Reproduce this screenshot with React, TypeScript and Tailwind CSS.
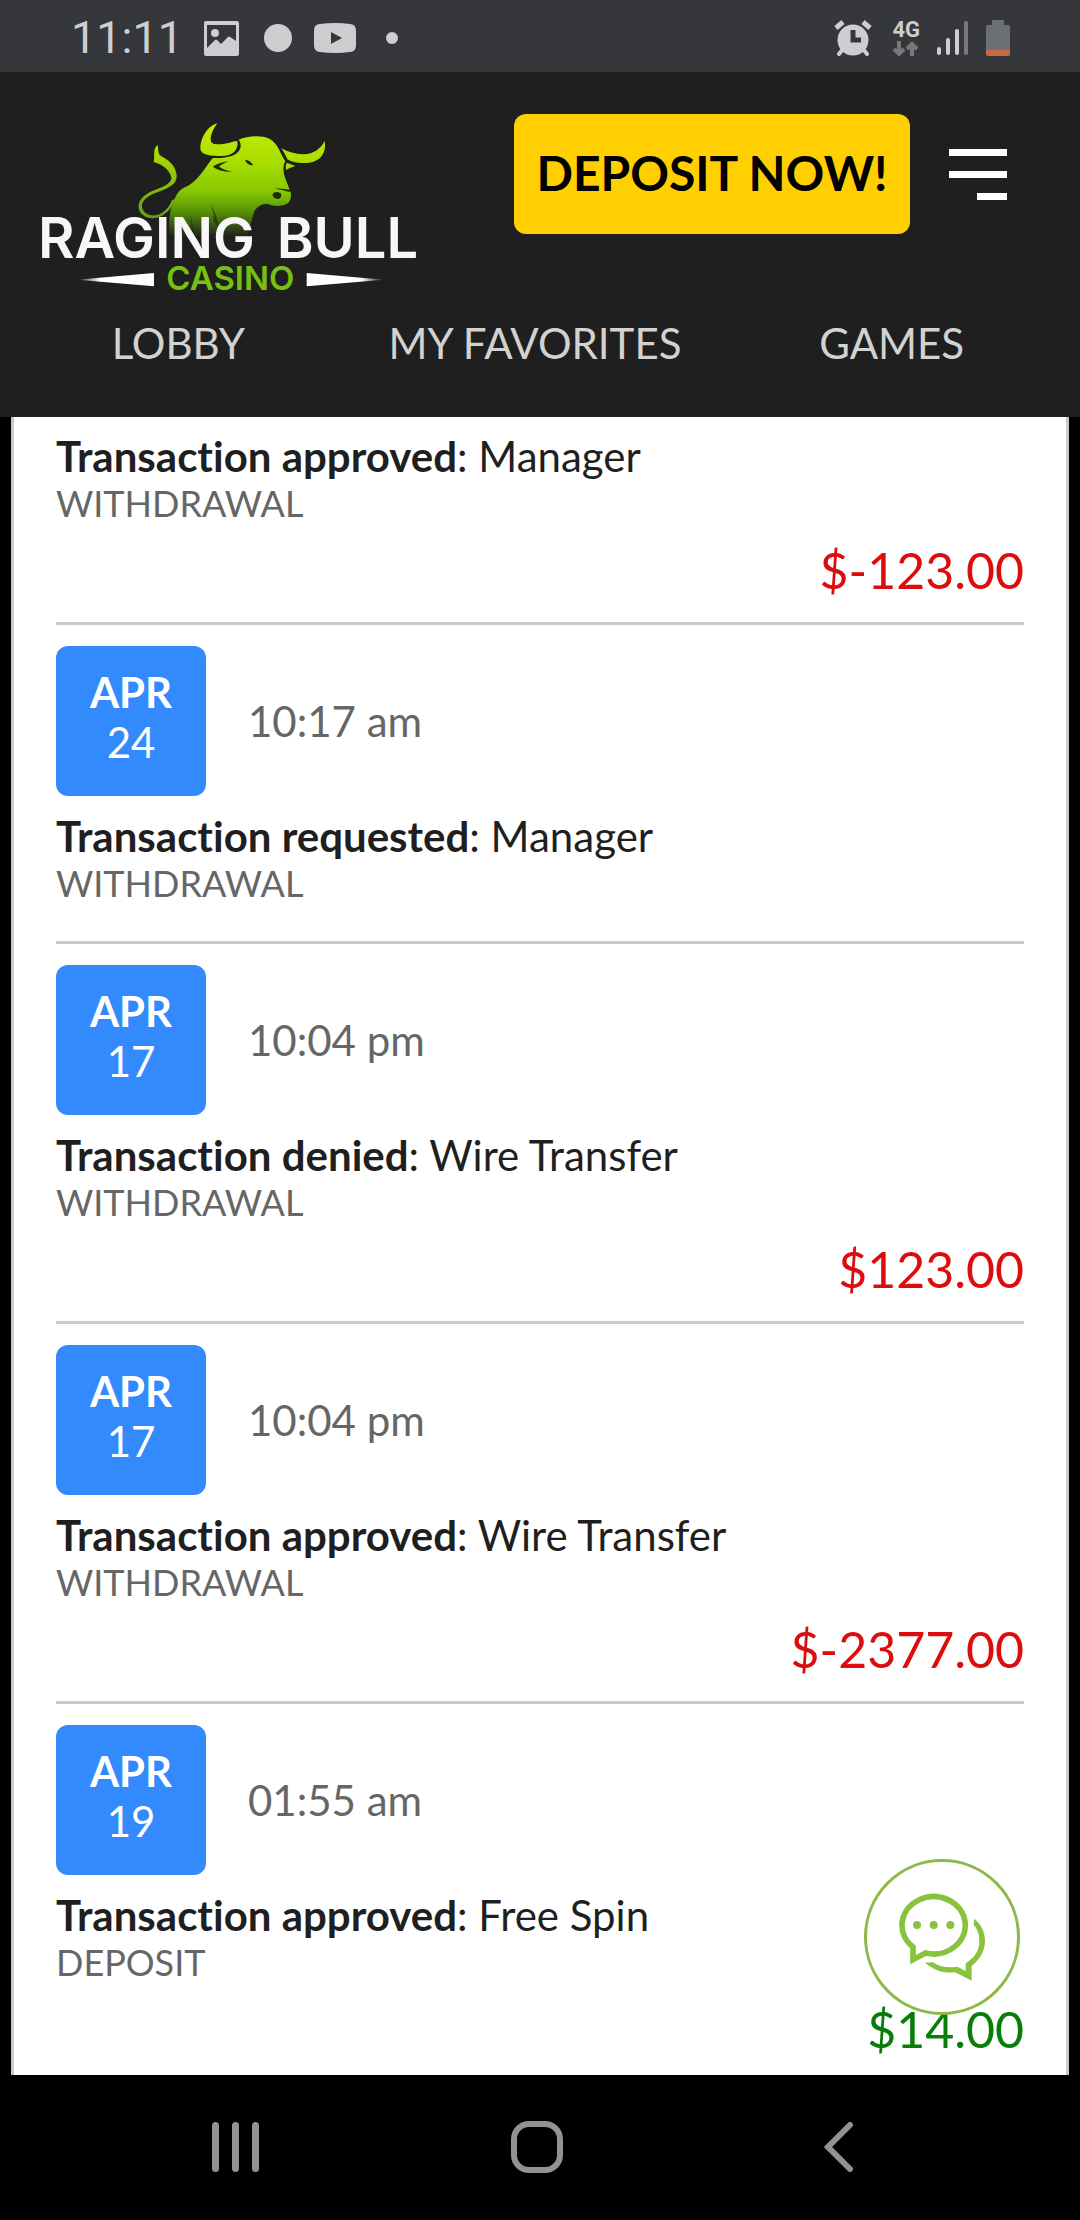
import React from "react";

const transactions = [
  {
    status: "Transaction approved",
    method: "Manager",
    type: "WITHDRAWAL",
    amount: "$-123.00",
  },
  {
    month: "APR",
    day: "24",
    time: "10:17 am",
    status: "Transaction requested",
    method: "Manager",
    type: "WITHDRAWAL",
  },
  {
    month: "APR",
    day: "17",
    time: "10:04 pm",
    status: "Transaction denied",
    method: "Wire Transfer",
    type: "WITHDRAWAL",
    amount: "$123.00",
  },
  {
    month: "APR",
    day: "17",
    time: "10:04 pm",
    status: "Transaction approved",
    method: "Wire Transfer",
    type: "WITHDRAWAL",
    amount: "$-2377.00",
  },
  {
    month: "APR",
    day: "19",
    time: "01:55 am",
    status: "Transaction approved",
    method: "Free Spin",
    type: "DEPOSIT",
    amount: "$14.00",
  },
];

const StatusBar = () => {
  return (
    <div className="flex h-[72px] items-center justify-between bg-[#35373b] pr-[70px] pl-[71px] pt-1 font-[Roboto,sans-serif] text-[#cdced0]">
      <div className="flex items-center">
        <span className="text-[45px] leading-[50px]">11:11</span>
        <svg className="ml-[21px] h-[35px] w-[35px]" viewBox="0 0 35 35">
          <path
            fillRule="evenodd"
            fill="currentColor"
            d="M2 0H33Q35 0 35 2V33Q35 35 33 35H2Q0 35 0 33V2Q0 0 2 0ZM3 4V27L11 19Q12 18 13 19L17 23L24 16Q25 15 26 16L32 20V4Z"
          />
          <circle cx="11" cy="12" r="4" fill="currentColor" />
        </svg>
        <span className="ml-[25px] h-7 w-7 rounded-full bg-current" />
        <svg className="ml-[22px] h-[30px] w-[42px]" viewBox="0 0 42 30">
          <path
            fillRule="evenodd"
            fill="currentColor"
            d="M6 1Q21-1 36 1Q42 1 42 8V22Q42 29 36 29Q21 31 6 29Q0 29 0 22V8Q0 1 6 1ZM17 9V21L28 15Z"
          />
        </svg>
        <span className="ml-[30px] h-3 w-3 rounded-full bg-current" />
      </div>
      <div className="flex items-center">
        <svg
          className="h-[36px] w-[38px]"
          viewBox="0 0 38 36"
          fill="none"
          stroke="currentColor"
        >
          <circle cx="19" cy="20" r="15.5" fill="currentColor" stroke="none" />
          <path d="M2 8L9 2M36 8L29 2" strokeWidth="5" />
          <path d="M9 29L5 34M29 29L33 34" strokeWidth="4" strokeLinecap="round" />
          <path d="M19 10V20H27" stroke="#35373b" strokeWidth="5" />
        </svg>
        <div className="ml-5 flex flex-col items-center">
          <span className="text-[22px] leading-[22px] font-bold">4G</span>
          <svg
            className="h-[16px] w-[26px]"
            viewBox="0 0 26 16"
            fill="none"
            stroke="#77797c"
            strokeWidth="4"
          >
            <path d="M6 0V13M1 8L6 13L11 8M19 15V3M14 8L19 3L24 8" />
          </svg>
        </div>
        <svg className="ml-[17px] h-[34px] w-[31px]" viewBox="0 0 31 34">
          <rect x="0" y="26" width="4" height="8" rx="2" fill="currentColor" />
          <rect x="9" y="17" width="4" height="17" rx="2" fill="currentColor" />
          <rect x="18" y="8" width="4" height="26" rx="2" fill="currentColor" />
          <rect x="27" y="0" width="4" height="34" rx="2" fill="#77797c" />
        </svg>
        <svg className="ml-[18px] h-[36px] w-[24px]" viewBox="0 0 24 36">
          <path d="M6 0H18V5H22Q24 5 24 7V30H0V7Q0 5 2 5H6Z" fill="#6d7073" />
          <path d="M0 30H24V34Q24 36 22 36H2Q0 36 0 34Z" fill="#c56a47" />
        </svg>
      </div>
    </div>
  );
};

const Logo = () => {
  return (
    <svg
      className="h-[210px] w-[420px] flex-shrink-0"
      viewBox="0 0 1260 630"
      role="img"
      aria-label="Raging Bull Casino"
    >
      <defs>
        <linearGradient id="bull" gradientUnits="userSpaceOnUse" x1="0" y1="70" x2="0" y2="410">
          <stop offset="0" stopColor="#c3ee00" />
          <stop offset="0.35" stopColor="#a9dd00" />
          <stop offset="0.6" stopColor="#86c800" />
          <stop offset="0.78" stopColor="#569108" />
          <stop offset="1" stopColor="#1f1f1f" />
        </linearGradient>
        <linearGradient id="tail" gradientUnits="userSpaceOnUse" x1="0" y1="130" x2="0" y2="360">
          <stop offset="0" stopColor="#b4e300" />
          <stop offset="1" stopColor="#5f9e14" />
        </linearGradient>
        <linearGradient id="left">
          <stop offset="0" stopColor="#1f1f1f" />
          <stop offset="0.3" stopColor="#ffffff" />
        </linearGradient>
        <linearGradient id="right">
          <stop offset="0.7" stopColor="#ffffff" />
          <stop offset="1" stopColor="#1f1f1f" />
        </linearGradient>
      </defs>

      {/* tail */}
      <path
        d="M413 134C396 150 406 168 401 186C424 193 447 205 454 232C456 246 438 258 412 267C375 280 353 298 356 325C362 355 400 363 430 345C448 333 459 318 464 298L456 300C448 320 437 332 424 340C402 352 372 347 366 322C363 303 382 286 416 275C448 264 472 252 470 226C466 194 444 180 424 169C413 161 416 148 413 134Z"
        fill="url(#tail)"
      />
      {/* head and shoulder */}
      <path
        d="M447 415C447 370 446 335 462 300C474 272 486 264 505 257C540 236 556 200 578 174C620 176 650 168 660 148C664 138 662 126 656 119C680 108 722 104 748 116C775 130 780 160 796 184C790 194 789 205 792 222C797 242 804 252 808 268C817 284 814 306 798 313C780 321 758 318 742 311C722 313 706 322 701 340L684 400L660 415Z"
        fill="url(#bull)"
      />
      {/* horns and ear */}
      <path
        d="M592 69C560 80 540 115 541 148C545 166 570 168 605 168C640 167 656 150 652 123C638 123 610 138 580 131C564 124 574 95 592 69Z"
        fill="url(#bull)"
      />
      <path
        d="M914 123C920 155 904 183 868 188C838 191 815 187 802 178C796 166 792 156 784 145C808 158 836 166 862 162C890 156 904 142 914 123Z"
        fill="url(#bull)"
      />
      <path d="M800 188L826 198Q810 202 798 210Q795 198 800 188Z" fill="url(#bull)" />
      {/* face */}
      <g fill="#1f2a08">
        <path d="M578 200Q596 188 626 184Q602 194 597 200Q612 210 636 215Q600 216 578 200Z" />
        <path d="M675 179Q690 180 700 196Q680 196 675 179Z" />
        <path d="M757 284Q762 270 782 280Q788 290 776 297Q762 298 757 284Z" />
        <path d="M765 266Q788 264 811 270L808 276Q788 268 765 266Z" />
        <path d="M568 308Q592 340 598 392L580 360Q584 335 568 308Z" opacity="0.6" />
        <path d="M512 345L524 405L515 390Z" opacity="0.6" />
      </g>

      <g fontFamily="Inter, sans-serif" fontWeight="600">
        <g fill="#f7f7f7" fontSize="168">
          <text x="54" y="474">RAGING</text>
          <text x="770" y="474">BULL</text>
        </g>
        <text x="631" y="570" fontSize="99" fill="#78c010" textAnchor="middle">
          CASINO
        </text>
      </g>
      <path d="M170 539L402 519V559Z" fill="url(#left)" />
      <path d="M1092 539L860 519V559Z" fill="url(#right)" />
    </svg>
  );
};

const Header = () => {
  return (
    <header className="bg-[#1f1f1f] pt-7 pb-[49px]">
      <div className="flex items-start justify-between pr-[73px] pl-5">
        <Logo />
        <div className="mt-[14px] flex items-center gap-[39px]">
          <button className="h-[120px] w-[396px] rounded-xl bg-[#ffcf02] pb-0.5 text-[48px] leading-[58px] font-bold whitespace-nowrap text-black">
            DEPOSIT NOW!
          </button>
          <button aria-label="Menu" className="flex w-[58px] flex-col items-end gap-[15px]">
            <span className="h-[7px] w-full bg-white" />
            <span className="h-[7px] w-full bg-white" />
            <span className="h-[7px] w-[30px] bg-white" />
          </button>
        </div>
      </div>
      <nav className="mt-2 grid grid-cols-3 pr-[10px] text-center text-[42px] leading-[50px] text-[#d2d2d2]">
        <a href="#lobby">LOBBY</a>
        <a href="#favorites">MY FAVORITES</a>
        <a href="#games">GAMES</a>
      </nav>
    </header>
  );
};

const Transaction = ({ item }: { item: (typeof transactions)[number] }) => {
  const isDeposit = item.type === "DEPOSIT";

  return (
    <li className="border-b-[3px] border-[#cbcbcb] py-[21px] first:pt-[14px] last:border-b-0 last:pb-[15px]">
      {item.month && (
        <div className="mb-[15px] flex items-center gap-[42px]">
          <div className="h-[150px] w-[150px] rounded-xl bg-[#338afc] pt-[21px] text-center text-[42px] leading-[50px] text-white">
            <p className="font-bold">{item.month}</p>
            <p>{item.day}</p>
          </div>
          <p className="text-[42px] leading-[50px] text-[#666]">{item.time}</p>
        </div>
      )}
      <p className="text-[42px] leading-[50px] text-[#1f1f1f]">
        <b className="font-bold">{item.status}</b>: {item.method}
      </p>
      <p className="text-[36px] leading-[44px] text-[#666]">{item.type}</p>
      <p
        className={`mt-[15px] text-right text-[50px] leading-[61px] ${
          isDeposit ? "text-[#087d08]" : "text-[#dc0d0d]"
        }`}
      >
        {item.amount}
      </p>
    </li>
  );
};

const ChatButton = () => {
  return (
    <button
      aria-label="Chat"
      className="absolute right-[60px] bottom-[60px] flex h-[156px] w-[156px] items-center justify-center rounded-full border-[3px] border-[#8cb94a] bg-white"
    >
      <svg className="h-[88px] w-[86px]" viewBox="0 0 258 264" fill="#89c23f">
        <path
          d="M42 162A95 86 0 1 1 80 180L42 200Z"
          fill="none"
          stroke="#89c23f"
          strokeWidth="17"
        />
        <circle cx="54" cy="96" r="12" />
        <circle cx="104" cy="96" r="12" />
        <circle cx="154" cy="96" r="12" />
        <path d="M226 77C247 93 258 118 258 144C258 175 242 200 218 219V263L168 238C135 242 105 232 78 209L102 208C122 222 145 226 175 221L200 234V211C225 196 241 174 241 145C241 125 236 108 224 96Z" />
      </svg>
    </button>
  );
};

const SystemNav = () => {
  return (
    <div className="grid h-[144px] grid-cols-3 items-center justify-items-center bg-black pr-[90px] pl-[84px]">
      <button aria-label="Recent apps" className="flex gap-[13px]">
        <span className="h-[50px] w-[7px] rounded-full bg-[#929292]" />
        <span className="h-[50px] w-[7px] rounded-full bg-[#929292]" />
        <span className="h-[50px] w-[7px] rounded-full bg-[#929292]" />
      </button>
      <button
        aria-label="Home"
        className="h-[52px] w-[52px] rounded-[18px] border-[6px] border-[#929292]"
      />
      <button aria-label="Back">
        <svg className="h-[50px] w-[30px]" viewBox="0 0 30 50">
          <path
            d="M26 3L4 25L26 47"
            fill="none"
            stroke="#929292"
            strokeWidth="6"
            strokeLinecap="round"
          />
        </svg>
      </button>
    </div>
  );
};

const App = () => {
  return (
    <div className="min-h-screen bg-black font-[Lato,sans-serif] [font-variant-ligatures:none]">
      <StatusBar />
      <Header />
      <main className="relative">
        <ul className="mx-[11px] border-x-[3px] border-[#cbcbcb] bg-white px-[42px]">
          {transactions.map((item, index) => (
            <Transaction key={index} item={item} />
          ))}
        </ul>
        <ChatButton />
      </main>
      <SystemNav />
    </div>
  );
};

export default App;
